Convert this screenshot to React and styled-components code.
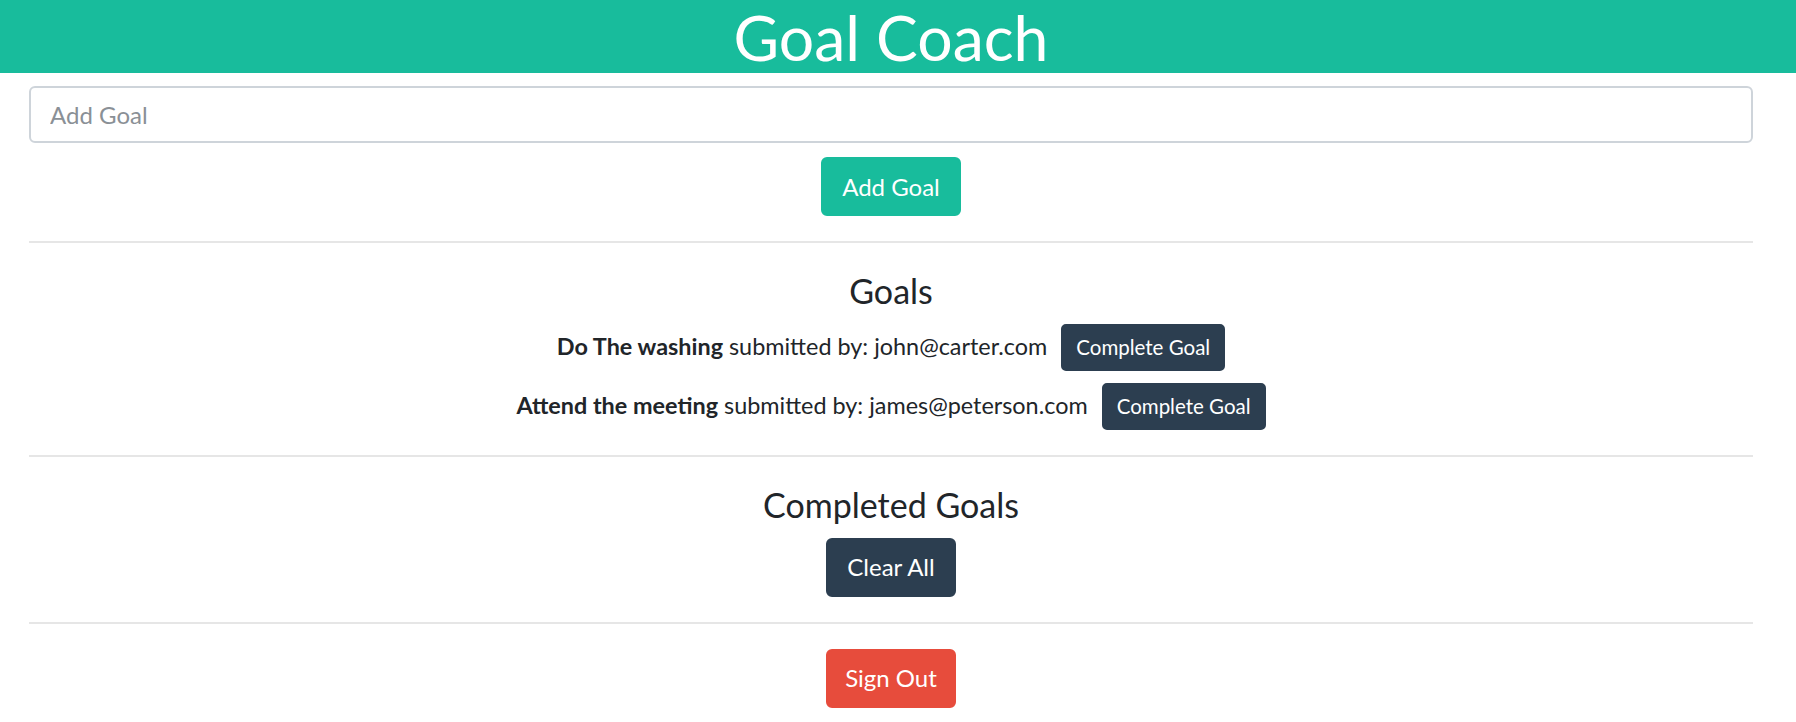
import React from "react";
import styled, { createGlobalStyle } from "styled-components";

const GlobalStyle = createGlobalStyle`
  html, body { margin: 0; padding: 0; background: #ffffff; }
  body {
    font-family: Lato, "Open Sans", "Liberation Sans", sans-serif;
    color: #212529;
    font-size: 24px;
    line-height: 1.5;
  }
  * { box-sizing: border-box; }
`;

const Header = styled.header`
  background: #18bc9c;
  height: 73px;
  padding: 0 43px 0 29px;
`;

const Title = styled.h1`
  margin: 0;
  text-align: center;
  color: #ffffff;
  font-weight: 400;
  font-size: 62.5px;
  line-height: 73px;
`;

const Content = styled.main`
  padding: 13px 43px 0 29px;
  display: flex;
  flex-direction: column;
  align-items: center;
`;

const GoalInput = styled.input`
  width: 100%;
  height: 57px;
  border: 2px solid #ced4da;
  border-radius: 6px;
  padding: 0 19px;
  font-family: inherit;
  font-size: 24px;
  color: #212529;
  outline: none;
  &::placeholder { color: #8a9096; }
`;

const Button = styled.button`
  font-family: inherit;
  color: #ffffff;
  border: 2px solid ${(p) => p.$bg};
  background: ${(p) => p.$bg};
  border-radius: ${(p) => (p.$small ? "5px" : "6px")};
  font-size: ${(p) => (p.$small ? "20.5px" : "24px")};
  line-height: 1.5;
  height: ${(p) => (p.$small ? "47px" : "59px")};
  padding: ${(p) => (p.$small ? "0 13px" : `0 ${p.$px || 19}px`)};
  margin-top: ${(p) => p.$mt || 0}px;
  cursor: pointer;
  white-space: nowrap;
`;

const Divider = styled.hr`
  align-self: stretch;
  border: 0;
  border-top: 2px solid #e6e6e6;
  margin: 25px 0 ${(p) => (p.$before ? 28 : 25)}px;
  height: 0;
`;

const SectionTitle = styled.h3`
  margin: 0 0 12px;
  font-weight: 400;
  font-size: 34px;
  line-height: 1.2;
  text-align: center;
`;

const GoalList = styled.div`
  display: flex;
  flex-direction: column;
  align-items: center;
  gap: 12px;
`;

const GoalRow = styled.div`
  display: flex;
  align-items: baseline;
  justify-content: center;
  gap: 14px;
`;

const GoalText = styled.span`
  white-space: nowrap;
  font-size: 23.4px;
`;

const GoalName = styled.strong`
  font-weight: 700;
`;

const goals = [
  { title: "Do The washing", email: "john@carter.com" },
  { title: "Attend the meeting", email: "james@peterson.com" },
];

export default function App() {
  return (
    <>
      <GlobalStyle />
      <Header>
        <Title>Goal Coach</Title>
      </Header>
      <Content>
        <GoalInput placeholder="Add Goal" />
        <Button $bg="#18bc9c" $mt={14}>Add Goal</Button>
        <Divider $before />
        <SectionTitle>Goals</SectionTitle>
        <GoalList>
          {goals.map((g) => (
            <GoalRow key={g.title}>
              <GoalText>
                <GoalName>{g.title}</GoalName> submitted by: {g.email}
              </GoalText>
              <Button $bg="#2c3e50" $small>Complete Goal</Button>
            </GoalRow>
          ))}
        </GoalList>
        <Divider $before />
        <SectionTitle>Completed Goals</SectionTitle>
        <Button $bg="#2c3e50">Clear All</Button>
        <Divider />
        <Button $bg="#e74c3c" $px={17}>Sign Out</Button>
      </Content>
    </>
  );
}
